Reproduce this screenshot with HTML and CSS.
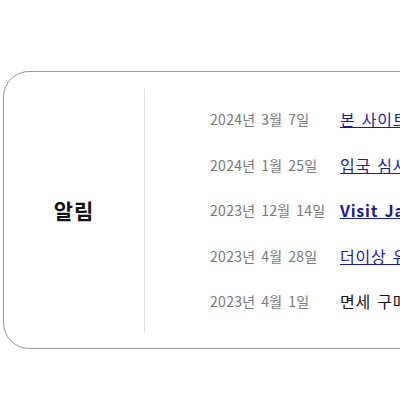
FILE: index.html
```html
<!DOCTYPE html>
<html lang="ko">
<head>
<meta charset="utf-8">
<link rel="stylesheet" href="styles.css">
</head>
<body>
<section class="notice">
  <h2 class="notice-title">알림</h2>
  <ul class="notice-list">
    <li class="item"><span class="date">2024년 3월 7일</span><a class="link" href="#">본 사이트의 이용 안내</a></li>
    <li class="item"><span class="date">2024년 1월 25일</span><a class="link" href="#">입국 심사 안내</a></li>
    <li class="item"><span class="date">2023년 12월 14일</span><a class="link bold" href="#">Visit Japan Web</a></li>
    <li class="item"><span class="date">2023년 4월 28일</span><a class="link" href="#">더이상 유효하지 않습니다</a></li>
    <li class="item"><span class="date">2023년 4월 1일</span><span class="plain">면세 구매 안내</span></li>
  </ul>
</section>
</body>
</html>
```
FILE: styles.css
```css
html, body {
  margin: 0;
  padding: 0;
  overflow: hidden;
  background: #fff;
}
body {
  font-family: "Noto Sans CJK KR", "Noto Sans", sans-serif;
  padding: 71px 0 0 3px;
}
.notice {
  display: flex;
  width: 640px;
  height: 278px;
  border: 1px solid #999;
  border-radius: 26px;
  box-sizing: border-box;
}
.notice-title {
  width: 140px;
  flex: none;
  margin: 0;
  display: flex;
  align-items: center;
  justify-content: center;
  font-size: 21px;
  letter-spacing: 1px;
  font-weight: 700;
  color: #111;
}
.notice-list {
  list-style: none;
  margin: 16px 0;
  padding: 0 0 0 65px;
  border-left: 1px solid #e2e2ea;
  display: flex;
  flex-direction: column;
  justify-content: center;
}
.item {
  display: flex;
  align-items: center;
  height: 45.5px;
  white-space: nowrap;
}
.date {
  width: 130px;
  flex: none;
  font-size: 14px;
  letter-spacing: 0.3px;
  word-spacing: 1.5px;
  color: #777;
}
.link {
  font-size: 16px;
  letter-spacing: 0.8px;
  word-spacing: 1px;
  color: #1a1a9c;
  text-decoration: underline;
}
.bold {
  font-weight: 700;
}
.plain {
  font-size: 16px;
  letter-spacing: 0.8px;
  word-spacing: 1px;
  color: #111;
}
```
